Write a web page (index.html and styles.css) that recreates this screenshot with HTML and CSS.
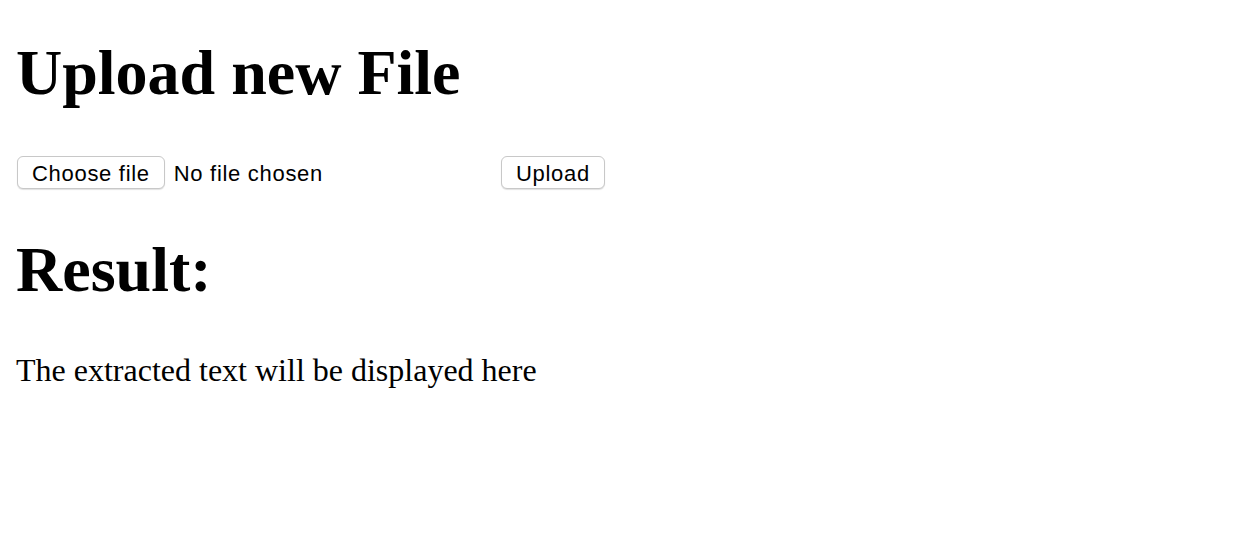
FILE: index.html
```html
<!DOCTYPE html>
<html lang="en">
<head>
<meta charset="utf-8">
<title>Upload new File</title>
<link rel="stylesheet" href="styles.css">
</head>
<body>
<h1 class="heading">Upload new File</h1>
<form class="upload-form" method="post" enctype="multipart/form-data">
  <label class="file-picker">
    <input class="file-input" type="file" name="file">
    <span class="btn">Choose file</span>
    <span class="file-name">No file chosen</span>
  </label>
  <button class="btn" type="submit">Upload</button>
</form>
<h1 class="heading">Result:</h1>
<p class="result-text">The extracted text will be displayed here</p>
</body>
</html>
```
FILE: styles.css
```css
html, body {
  background: #ffffff;
}
body {
  margin: 0;
  padding: 0 16px;
  font-family: "Liberation Serif", "Times New Roman", serif;
  color: #000000;
}
.heading {
  font-family: "Liberation Serif", "Times New Roman", serif;
  font-weight: 700;
  font-size: 64px;
  line-height: 74px;
  margin: 0;
}
.heading:first-child {
  padding-top: 36px;
}
.upload-form {
  display: flex;
  align-items: center;
  margin: 46px 0 44px;
}
.file-picker {
  display: flex;
  align-items: center;
  gap: 9px;
  width: 484px;
  position: relative;
}
.file-input {
  position: absolute;
  width: 1px;
  height: 1px;
  opacity: 0;
  overflow: hidden;
}
.btn {
  font-family: "Liberation Sans", Arial, sans-serif;
  font-size: 22px;
  letter-spacing: 0.7px;
  color: #000000;
  background: #ffffff;
  border: 1px solid #c8c8c8;
  border-radius: 6px;
  box-shadow: 0 1px 1px rgba(0, 0, 0, 0.12);
  height: 33px;
  padding: 3px 14px 0;
  margin-left: 1px;
  display: inline-flex;
  align-items: center;
  box-sizing: border-box;
  cursor: pointer;
}
.file-name {
  font-family: "Liberation Sans", Arial, sans-serif;
  font-size: 22px;
  letter-spacing: 0.7px;
  padding-top: 3px;
}
.result-text {
  font-size: 32px;
  margin: 45px 0;
}
```
